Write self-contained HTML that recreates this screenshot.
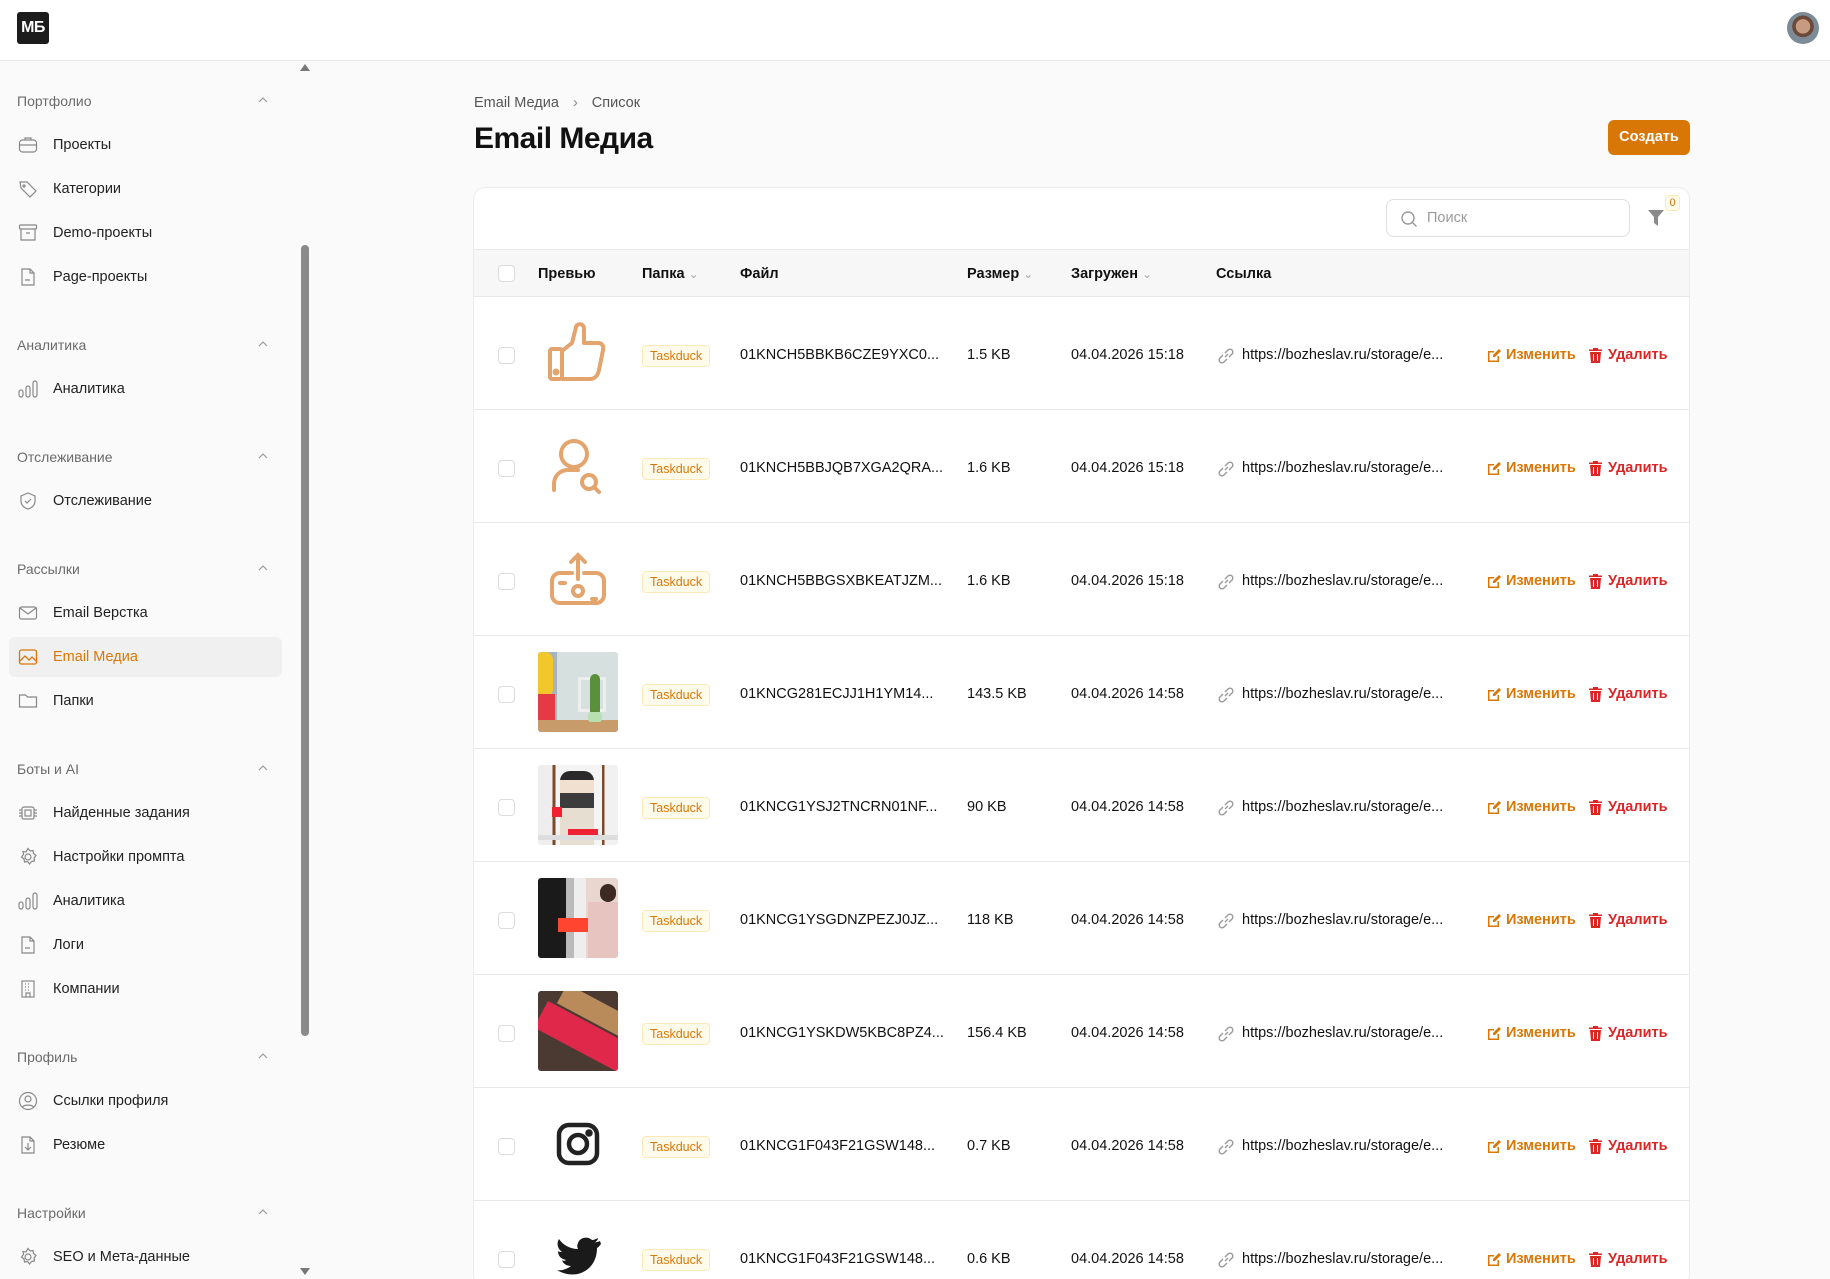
<!DOCTYPE html>
<html><head><meta charset="utf-8">
<style>
*{box-sizing:border-box;margin:0;padding:0}
html{overflow:hidden;height:1279px}
body{width:1830px;height:1279px;overflow:hidden;background:#fafafa;font-family:"Liberation Sans",Arial,sans-serif;color:#1a1a1a;position:relative}
.hdr{position:absolute;left:0;top:0;width:1830px;height:61px;background:#fff;border-bottom:1px solid #e6e6e6}
.logo{position:absolute;left:17px;top:12px;width:32px;height:32px;background:#1c1c1c;border-radius:3px;color:#fff;font-weight:bold;font-size:16px;line-height:32px;text-align:center;letter-spacing:-0.5px}
.ava{position:absolute;left:1787px;top:12px;width:32px;height:32px;border-radius:50%;background:radial-gradient(circle at 50% 45%,#c99a82 0 30%,#6b4a3a 31% 45%,#7c8b95 46%)}
.sb{position:absolute;left:0;top:61px;width:300px;height:1218px;background:#fafafa}
.sec{position:absolute;left:17px;font-size:14px;color:#6b6b6b}
.chev{position:absolute;left:258px;width:10px;height:10px}
.it{position:absolute;left:18px;font-size:14.5px;color:#222;height:20px;line-height:20px}
.it svg{position:absolute;left:0;top:0;width:20px;height:20px}
.it span{position:absolute;left:35px;white-space:nowrap}
.act{position:absolute;left:9px;top:637px;width:273px;height:40px;background:#f0f0f0;border-radius:6px}
.scr{position:absolute;left:301px;top:245px;width:8px;height:791px;background:#8a8a8a;border-radius:4px}
.bc{position:absolute;left:474px;top:95px;font-size:14.5px;color:#555}
.title{position:absolute;left:474px;top:122px;font-size:30px;font-weight:bold;color:#111;letter-spacing:-0.5px}
.btn{position:absolute;left:1608px;top:120px;width:82px;height:35px;background:#d97706;border-radius:6px;color:#fff;font-weight:bold;font-size:14.5px;text-align:center;line-height:35px}
.card{position:absolute;left:473px;top:187px;width:1217px;height:1100px;background:#fff;border:1px solid #ececec;border-radius:12px;overflow:hidden}
.search{position:absolute;left:1386px;top:199px;width:244px;height:38px;border:1px solid #e0e0e0;border-radius:8px;background:#fff}
.search span{position:absolute;left:40px;top:10px;font-size:14.5px;color:#9a9a9a}
.th{position:absolute;left:474px;top:249px;width:1215px;height:48px;background:#f7f7f7;border-top:1px solid #e8e8e8;border-bottom:1px solid #e8e8e8}
.thc{position:absolute;top:266px;font-size:14.5px;font-weight:bold;color:#111}
.cb{position:absolute;left:498px;width:17px;height:17px;border:1px solid #dcdcdc;border-radius:4px;background:#fff}
.row{position:absolute;left:474px;width:1215px;height:113px;border-bottom:1px solid #e8e8e8}
.c{position:absolute;font-size:14.5px;color:#111;white-space:nowrap}
.tag{position:absolute;left:642px;height:22px;padding:0 7px;border:1px solid #fde8b8;background:#fffbeb;border-radius:4px;font-size:12.5px;color:#d97706;line-height:20px}
.ed{color:#d97706;font-weight:bold}
.dl{color:#dc2626;font-weight:bold}
.tw{position:absolute;left:538px;width:80px;height:80px;overflow:hidden;border-radius:3px}
.tw>*{position:absolute;left:0;top:0;width:80px;height:80px}
</style></head><body>
<div class="hdr"><div class="logo">МБ</div><div class="ava"></div></div>
<div class="sb"></div>
<div class="act"></div>
<div class="scr"></div>
<div style="position:absolute;left:300px;top:64px;width:0;height:0;border-left:5px solid transparent;border-right:5px solid transparent;border-bottom:7px solid #777"></div>
<div style="position:absolute;left:300px;top:1268px;width:0;height:0;border-left:5px solid transparent;border-right:5px solid transparent;border-top:7px solid #777"></div>

<div class="sec" style="top:93px">Портфолио</div>
<div class="sec" style="top:337px">Аналитика</div>
<div class="sec" style="top:449px">Отслеживание</div>
<div class="sec" style="top:561px">Рассылки</div>
<div class="sec" style="top:761px">Боты и AI</div>
<div class="sec" style="top:1049px">Профиль</div>
<div class="sec" style="top:1205px">Настройки</div>
<svg class="chev" style="top:95px" viewBox="0 0 10 10"><path d="M1 7L5 3L9 7" fill="none" stroke="#999" stroke-width="1.2"/></svg>
<svg class="chev" style="top:339px" viewBox="0 0 10 10"><path d="M1 7L5 3L9 7" fill="none" stroke="#999" stroke-width="1.2"/></svg>
<svg class="chev" style="top:451px" viewBox="0 0 10 10"><path d="M1 7L5 3L9 7" fill="none" stroke="#999" stroke-width="1.2"/></svg>
<svg class="chev" style="top:563px" viewBox="0 0 10 10"><path d="M1 7L5 3L9 7" fill="none" stroke="#999" stroke-width="1.2"/></svg>
<svg class="chev" style="top:763px" viewBox="0 0 10 10"><path d="M1 7L5 3L9 7" fill="none" stroke="#999" stroke-width="1.2"/></svg>
<svg class="chev" style="top:1051px" viewBox="0 0 10 10"><path d="M1 7L5 3L9 7" fill="none" stroke="#999" stroke-width="1.2"/></svg>
<svg class="chev" style="top:1207px" viewBox="0 0 10 10"><path d="M1 7L5 3L9 7" fill="none" stroke="#999" stroke-width="1.2"/></svg>

<div class="it" style="top:135px"><svg viewBox="0 0 20 20" fill="none" stroke="#888" stroke-width="1.2"><rect x="1.5" y="5" width="17" height="12" rx="3"/><path d="M7 5V3h6v2M1.5 10h17"/></svg><span>Проекты</span></div>
<div class="it" style="top:179px"><svg viewBox="0 0 20 20" fill="none" stroke="#888" stroke-width="1.2"><path d="M2 3h7l9 9-6 6-9-9z"/><circle cx="6" cy="7" r="1"/></svg><span>Категории</span></div>
<div class="it" style="top:223px"><svg viewBox="0 0 20 20" fill="none" stroke="#888" stroke-width="1.2"><rect x="1.5" y="2" width="17" height="4" rx="1"/><path d="M3 6v11h14V6M8 10h4"/></svg><span>Demo-проекты</span></div>
<div class="it" style="top:267px"><svg viewBox="0 0 20 20" fill="none" stroke="#888" stroke-width="1.2"><path d="M4 2h8l4 4v12H4zM12 2v4h4M7 13h5"/></svg><span>Page-проекты</span></div>
<div class="it" style="top:379px"><svg viewBox="0 0 20 20" fill="none" stroke="#888" stroke-width="1.2"><rect x="1" y="11" width="4" height="7" rx="2"/><rect x="8" y="7" width="4" height="11" rx="2"/><rect x="15" y="2" width="4" height="16" rx="2"/></svg><span>Аналитика</span></div>
<div class="it" style="top:491px"><svg viewBox="0 0 20 20" fill="none" stroke="#888" stroke-width="1.2"><path d="M10 2l7 3v5c0 4-3 7-7 8-4-1-7-4-7-8V5z"/><path d="M7 10l2 2 4-4"/></svg><span>Отслеживание</span></div>
<div class="it" style="top:603px"><svg viewBox="0 0 20 20" fill="none" stroke="#888" stroke-width="1.2"><rect x="1.5" y="4" width="17" height="12" rx="2"/><path d="M2 5l8 6 8-6"/></svg><span>Email Верстка</span></div>
<div class="it" style="top:647px;color:#d97706"><svg viewBox="0 0 20 20" fill="none" stroke="#d97706" stroke-width="1.3"><rect x="1.5" y="3" width="17" height="14" rx="2"/><path d="M2 14l5-5 4 4 3-3 4 4"/></svg><span>Email Медиа</span></div>
<div class="it" style="top:691px"><svg viewBox="0 0 20 20" fill="none" stroke="#888" stroke-width="1.2"><path d="M1.5 4h6l2 2h9v10h-17z"/></svg><span>Папки</span></div>
<div class="it" style="top:803px"><svg viewBox="0 0 20 20" fill="none" stroke="#888" stroke-width="1.2"><rect x="4" y="4" width="12" height="12" rx="2"/><rect x="7" y="7" width="6" height="6"/><path d="M1 7h3M1 10h3M1 13h3M16 7h3M16 10h3M16 13h3"/></svg><span>Найденные задания</span></div>
<div class="it" style="top:847px"><svg viewBox="0 0 20 20" fill="none" stroke="#888" stroke-width="1.2"><circle cx="10" cy="10" r="3"/><path d="M10 1.5l2 2.5 3-.5.5 3 2.5 2-2 2.5.5 3-3 .5-2 2.5-2-2.5-3 .5-.5-3-2.5-2 2-2.5-.5-3 3 .5z"/></svg><span>Настройки промпта</span></div>
<div class="it" style="top:891px"><svg viewBox="0 0 20 20" fill="none" stroke="#888" stroke-width="1.2"><rect x="1" y="11" width="4" height="7" rx="2"/><rect x="8" y="7" width="4" height="11" rx="2"/><rect x="15" y="2" width="4" height="16" rx="2"/></svg><span>Аналитика</span></div>
<div class="it" style="top:935px"><svg viewBox="0 0 20 20" fill="none" stroke="#888" stroke-width="1.2"><path d="M4 2h8l4 4v12H4zM12 2v4h4M7 13h5"/></svg><span>Логи</span></div>
<div class="it" style="top:979px"><svg viewBox="0 0 20 20" fill="none" stroke="#888" stroke-width="1.2"><rect x="4" y="2" width="12" height="16"/><path d="M8 18v-4h4v4M7 5h1M10 5h1M13 5h0M7 8h1M10 8h1M7 11h1M10 11h1"/></svg><span>Компании</span></div>
<div class="it" style="top:1091px"><svg viewBox="0 0 20 20" fill="none" stroke="#888" stroke-width="1.2"><circle cx="10" cy="10" r="8.5"/><circle cx="10" cy="8" r="3"/><path d="M4.5 16c1.5-2.5 9.5-2.5 11 0"/></svg><span>Ссылки профиля</span></div>
<div class="it" style="top:1135px"><svg viewBox="0 0 20 20" fill="none" stroke="#888" stroke-width="1.2"><path d="M4 2h8l4 4v12H4zM12 2v4h4M10 8v7M7 12l3 3 3-3"/></svg><span>Резюме</span></div>
<div class="it" style="top:1247px"><svg viewBox="0 0 20 20" fill="none" stroke="#888" stroke-width="1.2"><circle cx="10" cy="10" r="3"/><path d="M10 1.5l2 2.5 3-.5.5 3 2.5 2-2 2.5.5 3-3 .5-2 2.5-2-2.5-3 .5-.5-3-2.5-2 2-2.5-.5-3 3 .5z"/></svg><span>SEO и Мета-данные</span></div>

<div class="bc">Email Медиа <span style="margin:0 10px;color:#888">›</span> Список</div>
<div class="title">Email Медиа</div>
<div class="btn">Создать</div>
<div class="card"></div>
<div class="search"><svg style="position:absolute;left:13px;top:10px" width="18" height="18" viewBox="0 0 18 18" fill="none" stroke="#999" stroke-width="1.4"><circle cx="8" cy="8" r="6"/><path d="M12.5 12.5l4 4"/></svg><span>Поиск</span></div>
<svg style="position:absolute;left:1647px;top:208px" width="18" height="20" viewBox="0 0 18 20"><path d="M1 2h16l-6 7v9l-4-3V9z" fill="#8a8a8a"/></svg>
<div style="position:absolute;left:1665px;top:195px;width:15px;height:16px;border:1px solid #fde8b8;background:#fffbeb;border-radius:4px;font-size:11px;color:#d97706;text-align:center;line-height:14px">0</div>
<div class="th"></div>
<div class="cb" style="top:265px"></div>
<div class="thc" style="left:538px">Превью</div>
<div class="thc" style="left:642px">Папка <span style="color:#aaa;font-weight:normal;font-size:12px">&#8964;</span></div>
<div class="thc" style="left:740px">Файл</div>
<div class="thc" style="left:967px">Размер <span style="color:#aaa;font-weight:normal;font-size:12px">&#8964;</span></div>
<div class="thc" style="left:1071px">Загружен <span style="color:#aaa;font-weight:normal;font-size:12px">&#8964;</span></div>
<div class="thc" style="left:1216px">Ссылка</div>

<div id="rows"></div>
<script>
var data=[
["01KNCH5BBKB6CZE9YXC0...","1.5 KB","04.04.2026 15:18","thumb"],
["01KNCH5BBJQB7XGA2QRA...","1.6 KB","04.04.2026 15:18","user"],
["01KNCH5BBGSXBKEATJZM...","1.6 KB","04.04.2026 15:18","cam"],
["01KNCG281ECJJ1H1YM14...","143.5 KB","04.04.2026 14:58","p1"],
["01KNCG1YSJ2TNCRN01NF...","90 KB","04.04.2026 14:58","p2"],
["01KNCG1YSGDNZPEZJ0JZ...","118 KB","04.04.2026 14:58","p3"],
["01KNCG1YSKDW5KBC8PZ4...","156.4 KB","04.04.2026 14:58","p4"],
["01KNCG1F043F21GSW148...","0.7 KB","04.04.2026 14:58","ig"],
["01KNCG1F043F21GSW148...","0.6 KB","04.04.2026 14:58","tw"]];
var o="#e3a46e",h="";
function ab(s){return '<div style="position:absolute;'+s+'"></div>';}
var ic={
thumb:'<svg viewBox="0 0 80 80" fill="none" stroke="'+o+'" stroke-width="4" stroke-linejoin="round"><rect x="12" y="36" width="12" height="30" rx="2"/><path d="M24 38l10-8 4-16c1-4 8-4 8 2v14h14c4 0 6 3 5 7l-4 20c-1 5-4 9-9 9H24"/><circle cx="18" cy="59" r="1.5" fill="'+o+'"/></svg>',
user:'<svg viewBox="0 0 80 80" fill="none" stroke="'+o+'" stroke-width="4" stroke-linecap="round"><circle cx="36" cy="28" r="13"/><path d="M16 64v-6c0-8 6-14 14-14h10"/><circle cx="51" cy="56" r="7"/><path d="M56 61l5 5"/></svg>',
cam:'<svg viewBox="0 0 80 80" fill="none" stroke="'+o+'" stroke-width="4" stroke-linecap="round"><path d="M34 34h-12a8 8 0 0 0-8 8v14a8 8 0 0 0 8 8h36a8 8 0 0 0 8-8V42a8 8 0 0 0-8-8H46"/><path d="M40 40V16M33 23l7-7 7 7"/><circle cx="40" cy="52" r="5"/><path d="M22 44h5M54 60h4"/></svg>',
p1:'<div style="background:linear-gradient(90deg,#a7b3bd 0 24%,#d5e0df 24%)">'+ab('left:0;top:0;width:15px;height:45px;background:#f2c72c;border-radius:0 8px 8px 0')+ab('left:0;top:42px;width:17px;height:28px;background:#e63946')+ab('left:0;top:68px;width:80px;height:12px;background:#c89b6a')+ab('left:40px;top:25px;width:28px;height:35px;border:3px solid #eee')+ab('left:52px;top:22px;width:10px;height:42px;background:#5a8f3c;border-radius:5px')+ab('left:50px;top:60px;width:14px;height:10px;background:#b8e0b0;border-radius:3px')+'</div>',
p2:'<div style="background:linear-gradient(90deg,#eee 0 18%,#7a4a2a 18% 22%,#f4f4f4 22% 80%,#7a4a2a 80% 83%,#f1f1f1 83%)">'+ab('left:22px;top:6px;width:34px;height:74px;background:linear-gradient(#2a2a2a 0 12%,#f1e0d0 12% 30%,#3c3c3c 30% 50%,#e7ded2 50%);border-radius:10px 10px 0 0')+ab('left:30px;top:64px;width:30px;height:8px;background:#e23')+ab('left:14px;top:42px;width:10px;height:10px;background:#e23')+ab('left:0;top:70px;width:80px;height:5px;background:#ddd')+'</div>',
p3:'<div style="background:linear-gradient(90deg,#1a1a1a 0 35%,#bbb 35% 45%,#eee 45% 60%,#e9d6cf 60%)">'+ab('left:20px;top:40px;width:30px;height:14px;background:#ff4530')+ab('left:62px;top:6px;width:16px;height:18px;background:#3a2a22;border-radius:8px')+ab('left:50px;top:24px;width:30px;height:56px;background:#e8c4c0')+'</div>',
p4:'<div style="background:#4a3a32">'+ab('left:-5px;top:10px;width:95px;height:30px;background:#e0284a;transform:rotate(28deg);transform-origin:left top;left:10px')+ab('left:20px;top:8px;width:70px;height:22px;background:#b98a5a;transform:rotate(28deg)')+'</div>',
ig:'<svg viewBox="0 0 80 80" fill="none" stroke="#222" stroke-width="4.5"><rect x="21" y="21" width="38" height="38" rx="10"/><circle cx="40" cy="40" r="9"/><circle cx="51" cy="29" r="1.5" fill="#222"/></svg>',
tw:'<svg viewBox="0 0 80 80"><path d="M62 24c-2 1-4 1-6 2 2-1 4-3 4-5-2 1-4 2-6 2-4-4-12-3-14 3-1 2-1 4 0 6-8 0-15-4-19-10-3 5-1 10 3 13-2 0-3 0-4-1 0 5 3 8 8 9-1 1-3 1-4 0 1 4 5 6 9 6-4 3-9 5-14 4 18 11 40 1 40-22 2-1 3-3 4-4z" fill="#1a1a1a"/></svg>'};
var link='<svg width="18" height="18" viewBox="0 0 18 18" fill="none" stroke="#999" stroke-width="1.4" style="position:absolute;left:0;top:0"><path d="M8 10l3-3M6 8l-3 3a2.8 2.8 0 0 0 4 4l3-3M12 10l3-3a2.8 2.8 0 0 0-4-4L8 6"/></svg>';
var edit='<svg width="15" height="15" viewBox="0 0 15 15" style="position:absolute;left:0;top:1px"><path d="M1 3h6v1.5H2.5v8h8V8H12v6H1z" fill="#d97706"/><path d="M12 1l2 2-6 6H6V7z" fill="#d97706"/></svg>';
var trash='<svg width="13" height="15" viewBox="0 0 13 15" style="position:absolute;left:0;top:1px"><path d="M4 0h5v1.5h4V3H0V1.5h4z" fill="#dc2626"/><path d="M1 4h11l-1 11H2z" fill="#dc2626"/><path d="M4.5 6v7M8.5 6v7" stroke="#fff" stroke-width="1"/></svg>';
for(var i=0;i<data.length;i++){var t=297+i*113,c=t+59,d=data[i];
h+='<div class="row" style="top:'+t+'px"></div>';
h+='<div class="cb" style="top:'+(c-9)+'px"></div>';
h+='<div class="tw" style="top:'+(t+16)+'px">'+ic[d[3]]+'</div>';
h+='<div class="tag" style="top:'+(c-11)+'px">Taskduck</div>';
h+='<div class="c" style="left:740px;top:'+(c-9)+'px">'+d[0]+'</div>';
h+='<div class="c" style="left:967px;top:'+(c-9)+'px">'+d[1]+'</div>';
h+='<div class="c" style="left:1071px;top:'+(c-9)+'px">'+d[2]+'</div>';
h+='<div class="c" style="left:1217px;top:'+(c-9)+'px;padding-left:25px">'+link+'https://bozheslav.ru/storage/e...</div>';
h+='<div class="c ed" style="left:1487px;top:'+(c-9)+'px;padding-left:19px">'+edit+'Изменить</div>';
h+='<div class="c dl" style="left:1589px;top:'+(c-9)+'px;padding-left:19px">'+trash+'Удалить</div>';}
document.getElementById('rows').innerHTML=h;
</script>
</body></html>
